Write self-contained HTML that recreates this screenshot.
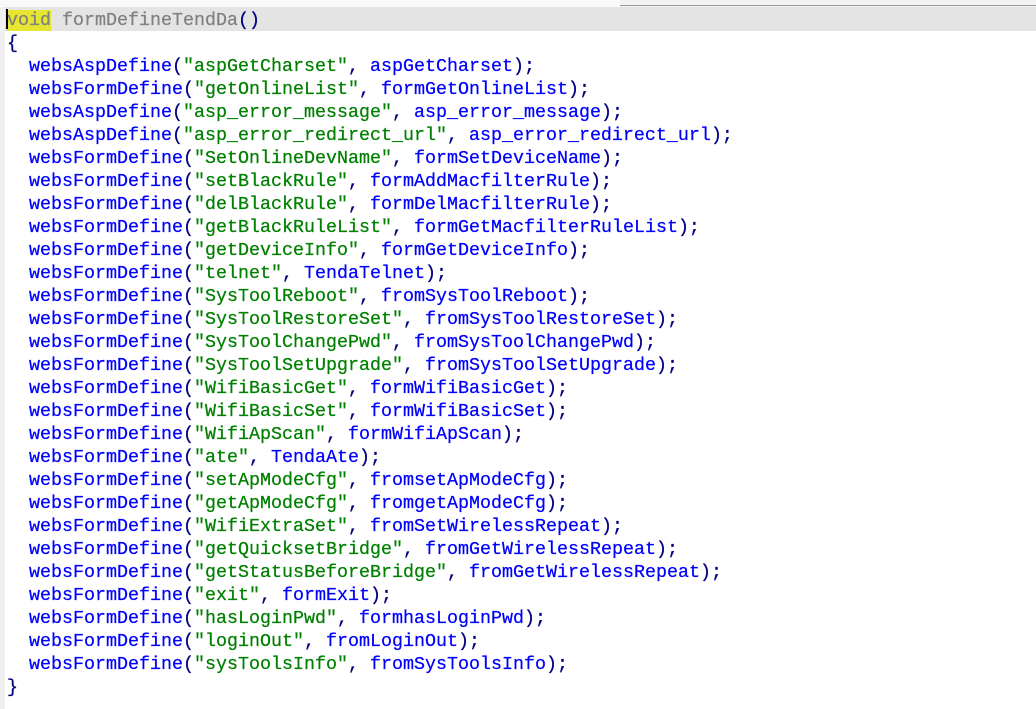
<!DOCTYPE html>
<html><head><meta charset="utf-8"><style>
html,body{margin:0;padding:0;width:1036px;height:709px;overflow:hidden;background:#fff}
.top{position:absolute;left:0;top:0;width:1036px;height:7px;background:#f2f2f2}
.top .a{position:absolute;left:0;top:0;width:620px;height:7px;background:#f9f9f9}
.top .b{position:absolute;left:620px;top:5px;width:416px;height:1px;background:#9a9a9a}
.gut{position:absolute;left:0;top:7px;width:5px;height:702px;background:#f0f0f0}
.hl{position:absolute;left:5px;top:7px;width:1031px;height:24px;background:#e4e4e4}
pre{position:absolute;left:7px;top:9px;margin:0;font-family:"Liberation Mono",monospace;font-size:18.33px;line-height:23px;color:#000080;-webkit-text-stroke:0.25px currentColor}
.f{color:#0000ff}.s{color:#008000}.g{color:#808080}
.y{background:#e6e632}
.cur{position:absolute;left:6px;top:9px;width:2px;height:20px;background:#000}
</style></head><body>
<div class="top"><div class="a"></div><div class="b"></div></div>
<div class="gut"></div><div class="hl"></div>
<pre><span class="g"><span class="y">void</span> formDefineTendDa</span>()
{
  <span class="f">websAspDefine</span>(<span class="s">"aspGetCharset"</span>, <span class="f">aspGetCharset</span>);
  <span class="f">websFormDefine</span>(<span class="s">"getOnlineList"</span>, <span class="f">formGetOnlineList</span>);
  <span class="f">websAspDefine</span>(<span class="s">"asp_error_message"</span>, <span class="f">asp_error_message</span>);
  <span class="f">websAspDefine</span>(<span class="s">"asp_error_redirect_url"</span>, <span class="f">asp_error_redirect_url</span>);
  <span class="f">websFormDefine</span>(<span class="s">"SetOnlineDevName"</span>, <span class="f">formSetDeviceName</span>);
  <span class="f">websFormDefine</span>(<span class="s">"setBlackRule"</span>, <span class="f">formAddMacfilterRule</span>);
  <span class="f">websFormDefine</span>(<span class="s">"delBlackRule"</span>, <span class="f">formDelMacfilterRule</span>);
  <span class="f">websFormDefine</span>(<span class="s">"getBlackRuleList"</span>, <span class="f">formGetMacfilterRuleList</span>);
  <span class="f">websFormDefine</span>(<span class="s">"getDeviceInfo"</span>, <span class="f">formGetDeviceInfo</span>);
  <span class="f">websFormDefine</span>(<span class="s">"telnet"</span>, <span class="f">TendaTelnet</span>);
  <span class="f">websFormDefine</span>(<span class="s">"SysToolReboot"</span>, <span class="f">fromSysToolReboot</span>);
  <span class="f">websFormDefine</span>(<span class="s">"SysToolRestoreSet"</span>, <span class="f">fromSysToolRestoreSet</span>);
  <span class="f">websFormDefine</span>(<span class="s">"SysToolChangePwd"</span>, <span class="f">fromSysToolChangePwd</span>);
  <span class="f">websFormDefine</span>(<span class="s">"SysToolSetUpgrade"</span>, <span class="f">fromSysToolSetUpgrade</span>);
  <span class="f">websFormDefine</span>(<span class="s">"WifiBasicGet"</span>, <span class="f">formWifiBasicGet</span>);
  <span class="f">websFormDefine</span>(<span class="s">"WifiBasicSet"</span>, <span class="f">formWifiBasicSet</span>);
  <span class="f">websFormDefine</span>(<span class="s">"WifiApScan"</span>, <span class="f">formWifiApScan</span>);
  <span class="f">websFormDefine</span>(<span class="s">"ate"</span>, <span class="f">TendaAte</span>);
  <span class="f">websFormDefine</span>(<span class="s">"setApModeCfg"</span>, <span class="f">fromsetApModeCfg</span>);
  <span class="f">websFormDefine</span>(<span class="s">"getApModeCfg"</span>, <span class="f">fromgetApModeCfg</span>);
  <span class="f">websFormDefine</span>(<span class="s">"WifiExtraSet"</span>, <span class="f">fromSetWirelessRepeat</span>);
  <span class="f">websFormDefine</span>(<span class="s">"getQuicksetBridge"</span>, <span class="f">fromGetWirelessRepeat</span>);
  <span class="f">websFormDefine</span>(<span class="s">"getStatusBeforeBridge"</span>, <span class="f">fromGetWirelessRepeat</span>);
  <span class="f">websFormDefine</span>(<span class="s">"exit"</span>, <span class="f">formExit</span>);
  <span class="f">websFormDefine</span>(<span class="s">"hasLoginPwd"</span>, <span class="f">formhasLoginPwd</span>);
  <span class="f">websFormDefine</span>(<span class="s">"loginOut"</span>, <span class="f">fromLoginOut</span>);
  <span class="f">websFormDefine</span>(<span class="s">"sysToolsInfo"</span>, <span class="f">fromSysToolsInfo</span>);
}</pre>
<div class="cur"></div>
</body></html>
